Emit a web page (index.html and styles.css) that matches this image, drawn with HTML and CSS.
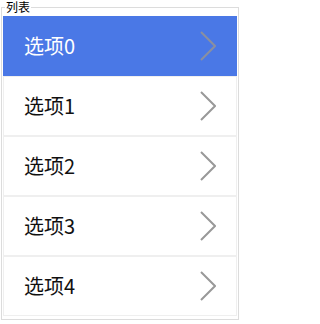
FILE: index.html
```html
<!DOCTYPE html>
<html lang="zh">
<head>
<meta charset="utf-8">
<link rel="stylesheet" href="styles.css">
</head>
<body>
<div class="page">
<fieldset class="panel">
  <legend class="panel-title">列表</legend>
  <ul class="list">
    <li class="item item-active"><span class="label">选项0</span><svg class="chev" viewBox="0 0 16 30" width="16" height="30"><polyline points="1,1 15,15 1,29" fill="none" stroke="#8a8fa0" stroke-width="2"/></svg></li>
    <li class="item"><span class="label">选项1</span><svg class="chev" viewBox="0 0 16 30" width="16" height="30"><polyline points="1,1 15,15 1,29" fill="none" stroke="#999" stroke-width="2"/></svg></li>
    <li class="item"><span class="label">选项2</span><svg class="chev" viewBox="0 0 16 30" width="16" height="30"><polyline points="1,1 15,15 1,29" fill="none" stroke="#999" stroke-width="2"/></svg></li>
    <li class="item"><span class="label">选项3</span><svg class="chev" viewBox="0 0 16 30" width="16" height="30"><polyline points="1,1 15,15 1,29" fill="none" stroke="#999" stroke-width="2"/></svg></li>
    <li class="item"><span class="label">选项4</span><svg class="chev" viewBox="0 0 16 30" width="16" height="30"><polyline points="1,1 15,15 1,29" fill="none" stroke="#999" stroke-width="2"/></svg></li>
  </ul>
</fieldset>
</div>
</body>
</html>
```
FILE: styles.css
```css
html, body {
  margin: 0;
  padding: 0;
  background: #fff;
  font-family: "Noto Sans CJK SC", "Noto Sans", sans-serif;
}
.page {
  width: 240px;
}
.panel {
  margin: 0 1px;
  padding: 2px 1px 3px;
  border: 1px solid #dcdcdc;
  min-width: 0;
}
.panel-title {
  padding: 0 1px;
  margin-left: 2px;
  font-size: 12px;
  line-height: 14px;
  color: #000;
}
.list {
  list-style: none;
  margin: 0;
  padding: 0;
}
.item {
  box-sizing: border-box;
  height: 60px;
  display: flex;
  align-items: center;
  justify-content: space-between;
  padding: 0 20px 0 20px;
  border: 1px solid #efefef;
  background: #fff;
  color: #111;
}
.item-active {
  background: #4a78e6;
  border-color: #4a78e6;
  color: #fff;
}
.label {
  font-size: 20px;
  line-height: 26px;
}
.chev {
  display: block;
  flex: none;
}
```
